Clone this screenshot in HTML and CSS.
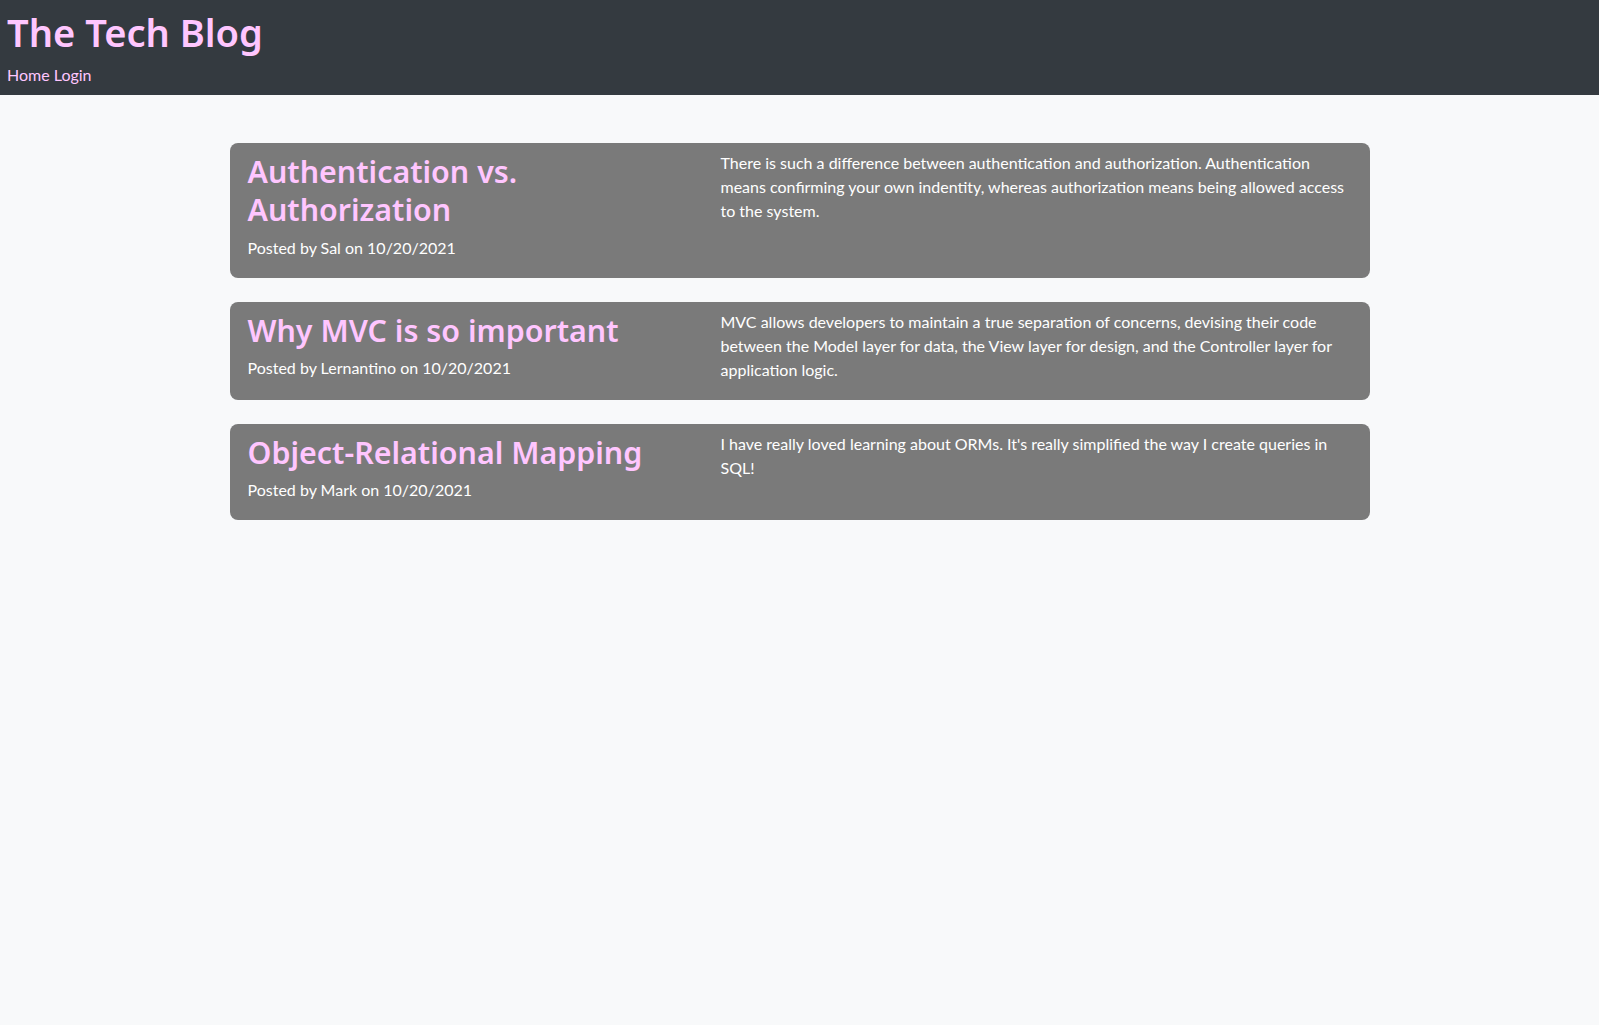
FILE: index.html
```html
<!DOCTYPE html>
<html lang="en">
<head>
<meta charset="utf-8">
<title>The Tech Blog</title>
<link rel="stylesheet" href="styles.css">
</head>
<body>
<header class="site-header">
  <h1 class="site-title">The Tech Blog</h1>
  <nav class="site-nav"><a href="#">Home</a> <a href="#">Login</a></nav>
</header>
<main class="container">
  <article class="post">
    <div class="post-head">
      <h2 class="post-title">Authentication vs. Authorization</h2>
      <p class="post-meta">Posted by Sal on 10/20/2021</p>
    </div>
    <p class="post-body">There is such a difference between authentication and authorization. Authentication means confirming your own indentity, whereas authorization means being allowed access to the system.</p>
  </article>
  <article class="post">
    <div class="post-head">
      <h2 class="post-title">Why MVC is so important</h2>
      <p class="post-meta">Posted by Lernantino on 10/20/2021</p>
    </div>
    <p class="post-body">MVC allows developers to maintain a true separation of concerns, devising their code between the Model layer for data, the View layer for design, and the Controller layer for application logic.</p>
  </article>
  <article class="post">
    <div class="post-head">
      <h2 class="post-title">Object-Relational Mapping</h2>
      <p class="post-meta">Posted by Mark on 10/20/2021</p>
    </div>
    <p class="post-body">I have really loved learning about ORMs. It's really simplified the way I create queries in SQL!</p>
  </article>
</main>
</body>
</html>
```
FILE: styles.css
```css
* { box-sizing: border-box; }
html, body { margin: 0; padding: 0; }
body {
  background: #f8f9fa;
  font-family: "Lato", "Open Sans", sans-serif;
  font-size: 16px;
  line-height: 24px;
  color: #212529;
}
.site-header {
  background: #343a40;
  padding: 8px 7px 8px;
}
.site-title {
  margin: 0 0 7px;
  font-family: "Noto Sans", sans-serif;
  font-weight: 600;
  font-size: 38.1px;
  line-height: 48px;
  color: #ffc6ff;
}
.site-nav { line-height: 24px; }
.site-nav a {
  color: #ffc6ff;
  text-decoration: none;
}
.container {
  width: 1140px;
  margin: 48px auto 0;
}
.post {
  display: grid;
  grid-template-columns: 473px 1fr;
  background: #7a7a7a;
  border-radius: 8px;
  padding: 8px 16px 2px 18px;
  margin-bottom: 24px;
  color: #fff;
}
.post-title {
  margin: 0 0 6px;
  padding-top: 2px;
  font-family: "Noto Sans", sans-serif;
  font-weight: 600;
  font-size: 30.4px;
  line-height: 38.4px;
  color: #ffc6ff;
}
.post-meta { margin: 0 0 16px; }
.post-body { margin: 0 0 16px; }
```
